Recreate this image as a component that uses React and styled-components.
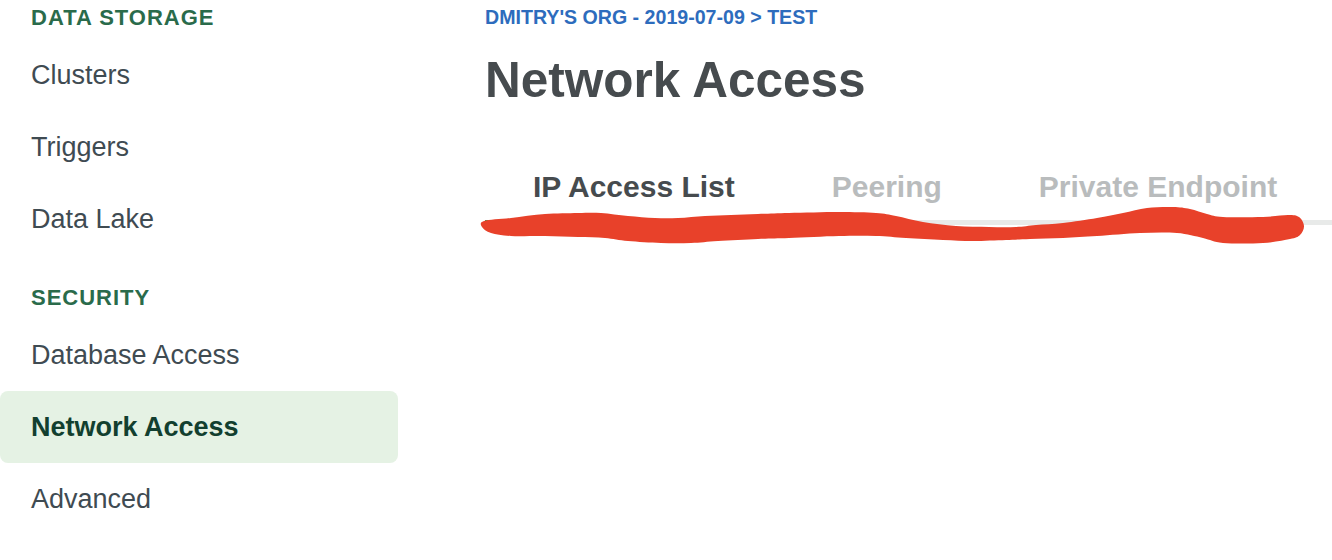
import React from "react";
import styled, { createGlobalStyle } from "styled-components";

const GlobalStyle = createGlobalStyle`
  body {
    margin: 0;
    background: #ffffff;
    font-family: "Liberation Sans", Arial, sans-serif;
  }
`;

const Page = styled.div`
  display: flex;
  width: 1332px;
  height: 560px;
  overflow: hidden;
`;

const Sidebar = styled.nav`
  width: 398px;
  flex-shrink: 0;
  display: flex;
  flex-direction: column;
`;

const Section = styled.div`
  display: flex;
  flex-direction: column;
  margin-top: ${({ $first }) => ($first ? "0" : "25px")};
`;

const SectionTitle = styled.div`
  height: 36px;
  line-height: 36px;
  padding-left: 31px;
  margin-bottom: 3px;
  font-size: 22px;
  font-weight: 700;
  letter-spacing: 1px;
  color: #2a6b4b;
  text-transform: uppercase;
`;

const NavItem = styled.a`
  display: block;
  height: 72px;
  line-height: 72px;
  padding-left: 31px;
  border-radius: 8px;
  font-size: 27px;
  font-weight: ${({ $active }) => ($active ? 700 : 400)};
  color: ${({ $active }) => ($active ? "#123f2f" : "#3f4b52")};
  background: ${({ $active }) => ($active ? "#e5f2e4" : "transparent")};
  text-decoration: none;
  cursor: pointer;
`;

const Main = styled.main`
  flex: 1;
  margin-left: 87px;
  display: flex;
  flex-direction: column;
`;

const Breadcrumb = styled.div`
  height: 34px;
  line-height: 34px;
  font-size: 19.6px;
  font-weight: 700;
  color: #2d6cbd;
  text-transform: uppercase;
`;

const Title = styled.h1`
  margin: 18px 0 0;
  height: 56px;
  line-height: 56px;
  font-size: 49.5px;
  font-weight: 700;
  color: #464b4e;
`;

const TabSection = styled.div`
  position: relative;
  margin-top: 42px;
`;

const TabList = styled.div`
  display: flex;
  border-bottom: 5px solid #e8eae9;
`;

const Tab = styled.div`
  position: relative;
  padding: 21px 49px 17px 48px;
  line-height: 32px;
  font-size: 30px;
  font-weight: 700;
  color: ${({ $active }) => ($active ? "#464b4e" : "#b9bcbd")};
  cursor: pointer;

  &::after {
    content: "";
    display: ${({ $active }) => ($active ? "block" : "none")};
    position: absolute;
    left: 0;
    right: 0;
    bottom: -5px;
    height: 5px;
    background: #3f9c5a;
  }
`;

const Scribble = styled.svg`
  position: absolute;
  left: -7px;
  top: 50px;
  width: 832px;
  height: 52px;
  pointer-events: none;
`;

const scribblePoints = [
  [484, 221], [511, 218], [545, 214], [578, 213], [601, 213], [628, 216],
  [655, 218], [678, 218], [705, 216], [731, 215], [758, 214], [789, 213],
  [839, 212], [876, 213], [896, 216], [923, 222], [956, 226], [989, 227],
  [1016, 227], [1036, 225], [1063, 223], [1097, 218], [1123, 213],
  [1147, 208], [1173, 207], [1190, 209], [1207, 214], [1223, 217],
  [1263, 217], [1288, 215], [1299, 217], [1304, 226], [1300, 235],
  [1290, 239], [1263, 243], [1223, 243], [1203, 238], [1177, 233],
  [1140, 233], [1097, 236], [1063, 238], [1030, 239], [1006, 240],
  [973, 241], [943, 240], [906, 238], [876, 236], [839, 236], [789, 238],
  [758, 239], [718, 241], [691, 243], [661, 243], [628, 241], [605, 238],
  [578, 237], [545, 236], [511, 236], [491, 233], [482, 227],
];

// closed catmull-rom through the points, as cubic beziers
const smoothPath = (pts) => {
  const n = pts.length;
  let d = `M${pts[0][0]},${pts[0][1]}`;
  for (let i = 0; i < n; i++) {
    const p0 = pts[(i - 1 + n) % n];
    const p1 = pts[i];
    const p2 = pts[(i + 1) % n];
    const p3 = pts[(i + 2) % n];
    const c1x = p1[0] + (p2[0] - p0[0]) / 6;
    const c1y = p1[1] + (p2[1] - p0[1]) / 6;
    const c2x = p2[0] - (p3[0] - p1[0]) / 6;
    const c2y = p2[1] - (p3[1] - p1[1]) / 6;
    d += ` C${c1x.toFixed(1)},${c1y.toFixed(1)} ${c2x.toFixed(1)},${c2y.toFixed(1)} ${p2[0]},${p2[1]}`;
  }
  return d + "Z";
};

const sections = [
  {
    title: "Data Storage",
    items: ["Clusters", "Triggers", "Data Lake"],
  },
  {
    title: "Security",
    items: ["Database Access", "Network Access", "Advanced"],
  },
];

const tabs = ["IP Access List", "Peering", "Private Endpoint"];

const App = () => {
  return (
    <Page>
      <GlobalStyle />
      <Sidebar>
        {sections.map((section, i) => (
          <Section key={section.title} $first={i === 0}>
            <SectionTitle>{section.title}</SectionTitle>
            {section.items.map((item) => (
              <NavItem key={item} $active={item === "Network Access"}>
                {item}
              </NavItem>
            ))}
          </Section>
        ))}
      </Sidebar>
      <Main>
        <Breadcrumb>Dmitry's Org - 2019-07-09 &gt; Test</Breadcrumb>
        <Title>Network Access</Title>
        <TabSection>
          <TabList>
            {tabs.map((tab, i) => (
              <Tab key={tab} $active={i === 0}>
                {tab}
              </Tab>
            ))}
          </TabList>
          <Scribble viewBox="478 200 832 52">
            <path d={smoothPath(scribblePoints)} fill="#e8412a" />
          </Scribble>
        </TabSection>
      </Main>
    </Page>
  );
};

export default App;
